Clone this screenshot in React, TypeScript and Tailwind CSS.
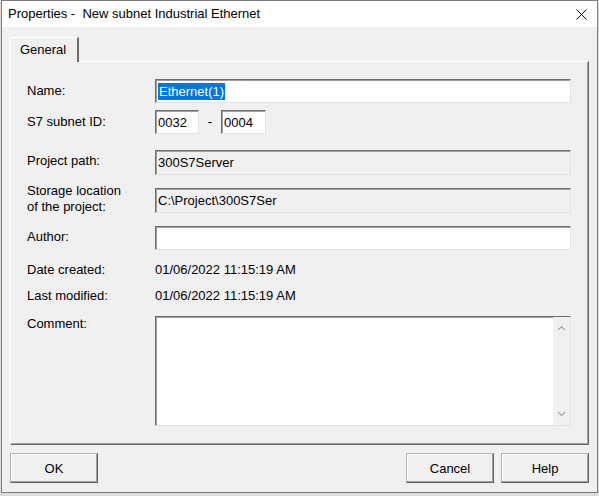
import React from "react";

const sunken =
  "border border-t-[#6d6d6d] border-l-[#6d6d6d] border-r-[#e3e3e3] border-b-[#e3e3e3] shadow-[inset_1px_1px_0_#a0a0a0]";

const Field = ({
  value,
  gray,
  className = "",
  selected,
}: {
  value?: string;
  gray?: boolean;
  className?: string;
  selected?: boolean;
}) => (
  <div
    className={`${sunken} ${gray ? "bg-[#f0f0f0]" : "bg-white"} flex items-center pl-[2px] ${className}`}
  >
    {value &&
      (selected ? (
        <span className="bg-[#0078d7] text-white px-px leading-[17px]">{value}</span>
      ) : (
        <span className="leading-[17px]">{value}</span>
      ))}
  </div>
);

const Chevron = ({ up }: { up?: boolean }) => (
  <svg width="9" height="6" viewBox="0 0 9 6">
    <path
      d={up ? "M1 5 L4.5 1.5 L8 5" : "M1 1 L4.5 4.5 L8 1"}
      fill="none"
      stroke="#a6a6a6"
      strokeWidth="1.2"
    />
  </svg>
);

const DialogButton = ({ label }: { label: string }) => (
  <button className="w-[88px] h-[30px] bg-[#f0f0f0] border border-t-[#b4b4b4] border-l-[#b4b4b4] border-r-[#646464] border-b-[#646464] shadow-[inset_-1px_-1px_0_#a0a0a0,inset_1px_1px_0_#ffffff] text-[13px] leading-none">
    {label}
  </button>
);

export default function App() {
  return (
    <div className="w-[599px] h-[496px] bg-[#dcdcdc] font-['Liberation_Sans',Arial,sans-serif] text-[13px] text-black">
      <div className="w-[597px] h-[493px] ml-[1px] border border-[#7c7c7c] bg-[#f0f0f0] flex flex-col">
        {/* title bar */}
        <div className="h-[26px] bg-white flex items-center justify-between pl-[6px] pr-[10px]">
          <span className="text-[13px] whitespace-pre">Properties -  New subnet Industrial Ethernet</span>
          <svg width="11" height="11" viewBox="0 0 11 11">
            <path d="M0.5 0.5 L10.5 10.5 M10.5 0.5 L0.5 10.5" stroke="#000" strokeWidth="1" />
          </svg>
        </div>

        <div className="flex flex-col px-[8px] pt-[10px]">
          {/* tab */}
          <div className="relative z-10 -mb-px w-[69px] h-[25px] bg-[#f0f0f0] border-t border-l border-t-white border-l-white border-r-2 border-r-[#6d6d6d] flex items-center justify-center pr-[2px]">
            General
          </div>

          {/* panel */}
          <div className="h-[384px] border border-t-white border-l-white border-r-[#696969] border-b-[#696969] shadow-[inset_-1px_-1px_0_#a0a0a0] pl-[16px] flex flex-col">
            <div className="mt-[17px] h-[24px] flex items-center">
              <span className="w-[128px]">Name:</span>
              <Field value="Ethernet(1)" selected className="w-[416px] h-full" />
            </div>

            <div className="mt-[7px] h-[24px] flex items-center">
              <span className="w-[128px]">S7 subnet ID:</span>
              <Field value="0032" className="w-[44px] h-full" />
              <span className="w-[22px] text-center">-</span>
              <Field value="0004" className="w-[45px] h-full" />
            </div>

            <div className="mt-[16px] h-[25px] flex items-center">
              <span className="w-[128px] -mt-[3px]">Project path:</span>
              <Field value="300S7Server" gray className="w-[416px] h-full" />
            </div>

            <div className="mt-[13px] h-[25px] flex items-center">
              <span className="w-[128px] leading-[16px] -mt-[4px]">
                Storage location
                <br />
                of the project:
              </span>
              <Field value="C:\Project\300S7Ser" gray className="w-[416px] h-full" />
            </div>

            <div className="mt-[13px] h-[24px] flex items-center">
              <span className="w-[128px] -mt-[2px]">Author:</span>
              <Field className="w-[416px] h-full" />
            </div>

            <div className="mt-[10px] h-[20px] flex items-center">
              <span className="w-[128px]">Date created:</span>
              <span>01/06/2022 11:15:19 AM</span>
            </div>

            <div className="mt-[6px] h-[20px] flex items-center">
              <span className="w-[128px]">Last modified:</span>
              <span>01/06/2022 11:15:19 AM</span>
            </div>

            <div className="mt-[10px] h-[110px] flex items-start">
              <span className="w-[128px] leading-[16px]">Comment:</span>
              <div className={`${sunken} bg-white w-[416px] h-full flex justify-end`}>
                <div className="w-[17px] h-full bg-[#f0f0f0] flex flex-col items-center justify-between py-[8px]">
                  <Chevron up />
                  <Chevron />
                </div>
              </div>
            </div>
          </div>

          {/* buttons */}
          <div className="mt-[8px] flex items-center">
            <DialogButton label="OK" />
            <div className="ml-auto flex gap-[7px]">
              <DialogButton label="Cancel" />
              <DialogButton label="Help" />
            </div>
          </div>
        </div>
      </div>
    </div>
  );
}
